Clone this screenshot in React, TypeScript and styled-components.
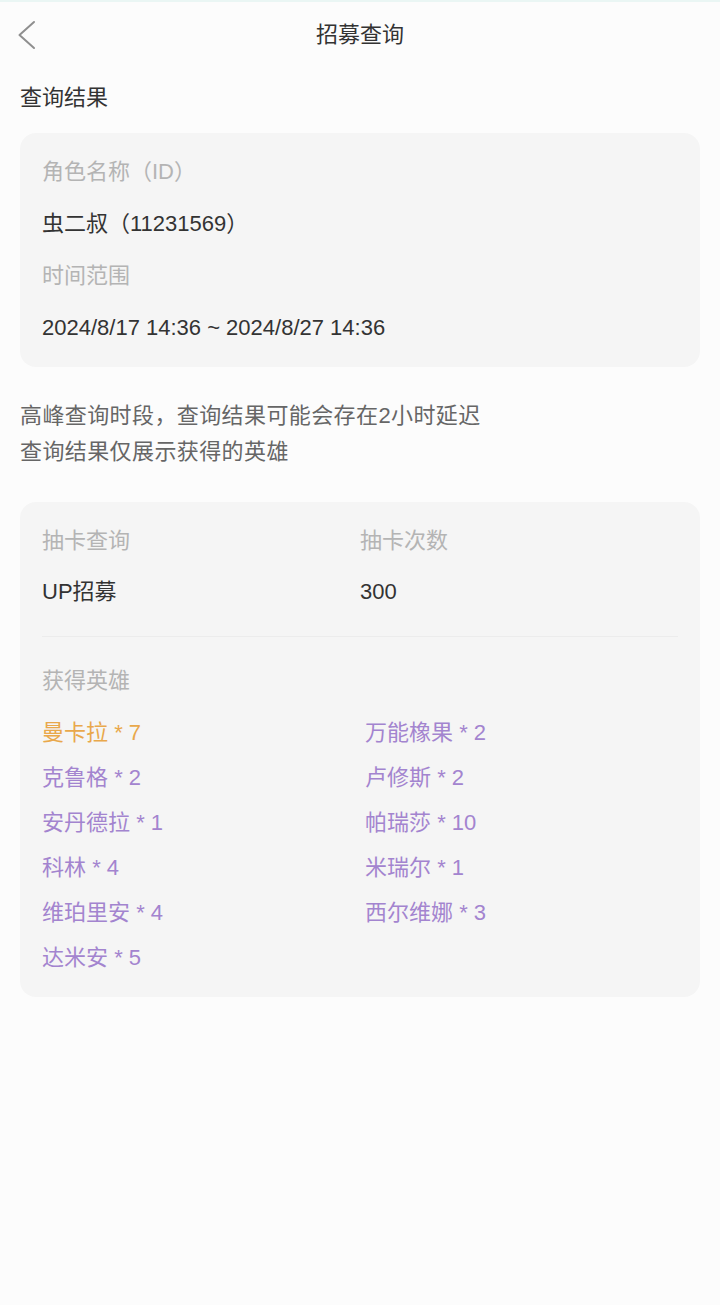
import React from "react";
import styled, { createGlobalStyle } from "styled-components";

const GlobalStyle = createGlobalStyle`
  html, body {
    margin: 0;
    padding: 0;
    background: #fcfcfc;
  }
  body {
    font-family: "Liberation Sans", "Noto Sans CJK SC", sans-serif;
    color: #333;
  }
  * { box-sizing: border-box; }
`;

const Page = styled.div`
  min-height: 1305px;
  background: #fcfcfc;
  border-top: 2px solid #eaf6f4;
  display: flex;
  flex-direction: column;
`;

const Header = styled.header`
  height: 66px;
  display: grid;
  grid-template-columns: 60px 1fr 60px;
  align-items: center;
`;

const BackButton = styled.button`
  border: none;
  background: none;
  padding: 0 0 0 17px;
  height: 40px;
  display: flex;
  align-items: center;
  cursor: pointer;
`;

const Title = styled.h1`
  margin: 0;
  font-size: 22px;
  font-weight: 400;
  line-height: 30px;
  text-align: center;
  color: #333;
`;

const Content = styled.main`
  padding: 0 20px;
  display: flex;
  flex-direction: column;
`;

const SectionTitle = styled.h2`
  margin: 15px 0 20px;
  font-size: 22px;
  font-weight: 400;
  line-height: 30px;
  color: #333;
`;

const Card = styled.section`
  background: #f5f5f5;
  border-radius: 16px;
  padding: 24px 22px;
  display: flex;
  flex-direction: column;
  gap: 22px;
`;

const Label = styled.div`
  font-size: 22px;
  line-height: 30px;
  color: #b4b4b4;
`;

const Value = styled.div`
  font-size: 22px;
  line-height: 30px;
  color: #333;
`;

const Notice = styled.div`
  margin: 31px 0 32px;
  font-size: 22px;
  letter-spacing: 0.4px;
  line-height: 36px;
  color: #666;
`;

const TwoCol = styled.div`
  display: grid;
  grid-template-columns: 1fr 1fr;
  row-gap: 21px;
`;

const Divider = styled.hr`
  margin: 7px 0 7px;
  border: none;
  height: 1px;
  background: #ececec;
`;

const HeroGrid = styled.div`
  display: grid;
  grid-template-columns: 1fr 1fr;
  column-gap: 10px;
  row-gap: 15px;
`;

const Hero = styled.div<{ $tone: "gold" | "purple" }>`
  font-size: 22px;
  line-height: 30px;
  color: ${(p) => (p.$tone === "gold" ? "#e9a84b" : "#a384cf")};
`;

const heroes: { name: string; count: number; tone: "gold" | "purple" }[] = [
  { name: "曼卡拉", count: 7, tone: "gold" },
  { name: "万能橡果", count: 2, tone: "purple" },
  { name: "克鲁格", count: 2, tone: "purple" },
  { name: "卢修斯", count: 2, tone: "purple" },
  { name: "安丹德拉", count: 1, tone: "purple" },
  { name: "帕瑞莎", count: 10, tone: "purple" },
  { name: "科林", count: 4, tone: "purple" },
  { name: "米瑞尔", count: 1, tone: "purple" },
  { name: "维珀里安", count: 4, tone: "purple" },
  { name: "西尔维娜", count: 3, tone: "purple" },
  { name: "达米安", count: 5, tone: "purple" },
];

export default function App() {
  return (
    <>
      <GlobalStyle />
      <Page>
        <Header>
          <BackButton aria-label="返回">
            <svg width="20" height="32" viewBox="0 0 20 32" fill="none">
              <path
                d="M17 3 L2.5 16 L17 29"
                stroke="#8f8f8f"
                strokeWidth="2"
                strokeLinecap="round"
                strokeLinejoin="round"
              />
            </svg>
          </BackButton>
          <Title>招募查询</Title>
          <div />
        </Header>
        <Content>
          <SectionTitle>查询结果</SectionTitle>
          <Card>
            <Label>角色名称（ID）</Label>
            <Value>虫二叔（11231569）</Value>
            <Label>时间范围</Label>
            <Value>2024/8/17 14:36 ~ 2024/8/27 14:36</Value>
          </Card>
          <Notice>
            高峰查询时段，查询结果可能会存在2小时延迟
            <br />
            查询结果仅展示获得的英雄
          </Notice>
          <Card>
            <TwoCol>
              <Label>抽卡查询</Label>
              <Label>抽卡次数</Label>
              <Value>UP招募</Value>
              <Value>300</Value>
            </TwoCol>
            <Divider />
            <Label>获得英雄</Label>
            <HeroGrid>
              {heroes.map((h) => (
                <Hero key={h.name} $tone={h.tone}>
                  {h.name} * {h.count}
                </Hero>
              ))}
            </HeroGrid>
          </Card>
        </Content>
      </Page>
    </>
  );
}
